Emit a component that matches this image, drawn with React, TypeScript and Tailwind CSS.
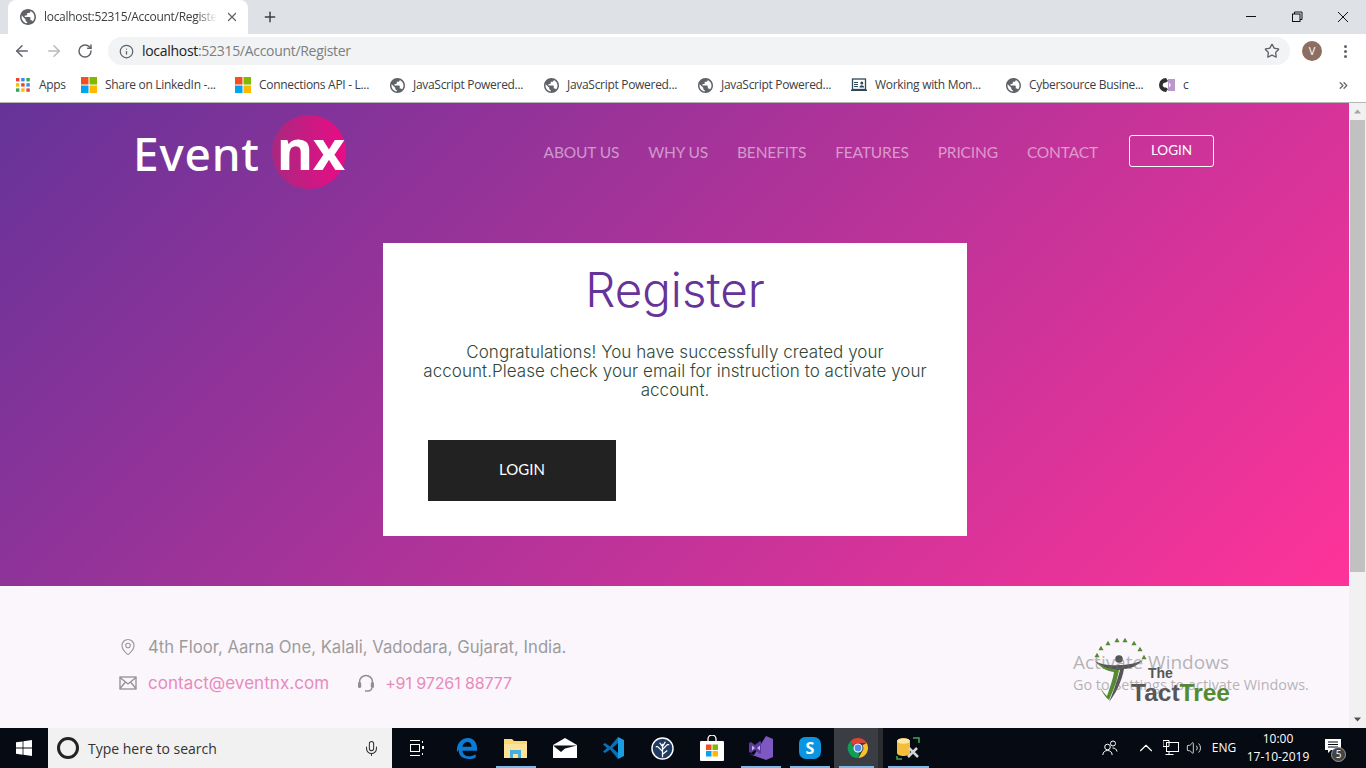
import { ArrowLeft, ArrowRight, RotateCw, Info, Star, X, Plus, MapPin, Mic, ChevronUp, Volume2, ChevronsRight } from "lucide-react";

const GLOBE = "M12 2C6.48 2 2 6.48 2 12s4.48 10 10 10 10-4.48 10-10S17.52 2 12 2zm-1 17.93c-3.95-.49-7-3.85-7-7.93 0-.62.08-1.21.21-1.79L9 15v1c0 1.1.9 2 2 2v1.93zm6.9-2.54c-.26-.81-1-1.39-1.9-1.39h-1v-3c0-.55-.45-1-1-1H8v-2h2c.55 0 1-.45 1-1V7h2c1.1 0 2-.9 2-2v-.41c2.93 1.19 5 4.06 5 7.41 0 2.08-.8 3.97-2.1 5.39z";

function Globe({ size = 18 }: { size?: number }) {
  return (
    <svg width={size} height={size} viewBox="2 2 20 20" className="shrink-0">
      <circle cx="12" cy="12" r="9" fill="#fff" />
      <path d={GLOBE} fill="#5f6368" />
    </svg>
  );
}

function MsLogo() {
  return (
    <svg width="16" height="16" viewBox="0 0 16 16" className="shrink-0">
      <rect width="7.5" height="7.5" fill="#f25022" />
      <rect x="8.5" width="7.5" height="7.5" fill="#7fba00" />
      <rect y="8.5" width="7.5" height="7.5" fill="#00a4ef" />
      <rect x="8.5" y="8.5" width="7.5" height="7.5" fill="#ffb900" />
    </svg>
  );
}

function AppsIcon() {
  const colors = ["#ea4335", "#4285f4", "#34a853", "#fbbc05", "#ea4335", "#4285f4", "#34a853", "#fbbc05", "#ea4335"];
  return (
    <svg width="14" height="14" viewBox="0 0 14 14" className="shrink-0">
      {colors.map((c, i) => (
        <rect key={i} x={(i % 3) * 5.2} y={Math.floor(i / 3) * 5.2} width="3.4" height="3.4" fill={c} />
      ))}
    </svg>
  );
}

function BoardIcon() {
  return (
    <svg width="16" height="14" viewBox="0 0 16 14" className="shrink-0">
      <rect x="1.5" y="1" width="13" height="10.5" fill="#fff" stroke="#2d4a5a" strokeWidth="1.3" />
      <rect x="3" y="4" width="4" height="1" fill="#2d4a5a" />
      <rect x="3" y="6" width="4" height="1" fill="#2d4a5a" />
      <rect x="3" y="8" width="4" height="1" fill="#2d4a5a" />
      <circle cx="10.8" cy="5" r="1.5" fill="#2d4a5a" />
      <path d="M8.5 9.500c0-3 4.600-3 4.600 0z" fill="#2d4a5a" />
      <rect x="0" y="11.500" width="16" height="1.500" fill="#2d4a5a" />
    </svg>
  );
}

function CIcon() {
  return (
    <svg width="16" height="14" viewBox="0 0 16 14" className="shrink-0">
      <rect x="9" y="1" width="7" height="12" fill="#b79ac9" />
      <path d="M7 0a7 7 0 1 0 0 14l2-3-2-1.500a2.600 2.600 0 1 1 0-5L9 3z" fill="#2f2f2f" />
      <path d="M10 4.500l2 2.500-2 2.500z" fill="#fff" />
    </svg>
  );
}

function Bookmark({ icon, label, w }: { icon: React.ReactNode; label: string; w: string }) {
  return (
    <div className={`flex items-center gap-2 shrink-0 ${w}`}>
      <span className="w-4 flex justify-center shrink-0">{icon}</span>
      <span className="text-[12px] tracking-[-0.3px] text-[#3c4043] whitespace-nowrap">{label}</span>
    </div>
  );
}

function Browser() {
  return (
    <header className="shrink-0 bg-white font-['Open_Sans',sans-serif]">
      <div className="h-[34px] bg-[#dee1e6] flex items-stretch">
        <div className="ml-2 w-[240px] bg-white rounded-t-lg flex items-center pl-[12px] pr-[9px]">
          <Globe size={16} />
          <span className="ml-2 text-[12px] tracking-[-0.3px] text-[#3c4043] whitespace-nowrap overflow-hidden flex-1 [mask-image:linear-gradient(90deg,#000_88%,transparent)]">localhost:52315/Account/Register</span>
          <X size={14} strokeWidth={2.2} className="ml-2 text-[#5f6368]" />
        </div>
        <div className="ml-[14px] flex items-center">
          <Plus size={16} strokeWidth={2.2} className="text-[#3c4043]" />
        </div>
        <div className="ml-auto flex items-center">
          <div className="w-[46px] flex justify-center">
            <svg width="12" height="12" viewBox="0 0 12 12"><rect x="1" y="5" width="10" height="1" fill="#111" /></svg>
          </div>
          <div className="w-[46px] flex justify-center">
            <svg width="12" height="12" viewBox="0 0 12 12" fill="none" stroke="#111"><rect x="1.500" y="3" width="7.500" height="7.500" /><path d="M3.500 3V1h7.500v7.500H9" /></svg>
          </div>
          <div className="w-[46px] flex justify-center">
            <svg width="12" height="12" viewBox="0 0 12 12" stroke="#111"><path d="M1 1l10 10M11 1L1 11" /></svg>
          </div>
        </div>
      </div>
      <div className="h-[34px] flex items-center">
        <div className="w-[108px] flex items-center pl-[13px] gap-[14px] shrink-0">
          <ArrowLeft size={18} strokeWidth={2} className="text-[#5f6368]" />
          <ArrowRight size={18} strokeWidth={2} className="text-[#b8babd]" />
          <RotateCw size={16} strokeWidth={2.2} className="text-[#5f6368]" />
        </div>
        <div className="w-[1182px] h-[28px] rounded-full bg-[#f1f3f4] flex items-center pl-[11px] pr-[10px] shrink-0">
          <Info size={15} strokeWidth={2} className="text-[#5f6368]" />
          <span className="ml-[8px] text-[14px] tracking-[-0.3px] text-[#7b7e82] leading-none"><span className="text-[#202124]">localhost</span>:52315/Account/Register</span>
          <Star size={16} strokeWidth={2} className="ml-auto text-[#5f6368]" />
        </div>
        <div className="ml-[12px] w-5 h-5 rounded-full bg-[#8d6e63] text-white text-[11px] flex items-center justify-center shrink-0">V</div>
        <div className="ml-[22px] flex flex-col gap-[2px]">
          <span className="w-[3px] h-[3px] rounded-full bg-[#5f6368]" />
          <span className="w-[3px] h-[3px] rounded-full bg-[#5f6368]" />
          <span className="w-[3px] h-[3px] rounded-full bg-[#5f6368]" />
        </div>
      </div>
      <div className="h-[34px] flex items-center pl-[15px] border-b border-[#b5b5b5] box-content">
        <Bookmark w="w-[66px]" icon={<AppsIcon />} label="Apps" />
        <Bookmark w="w-[154px]" icon={<MsLogo />} label="Share on LinkedIn -..." />
        <Bookmark w="w-[154px]" icon={<MsLogo />} label="Connections API - L..." />
        <Bookmark w="w-[154px]" icon={<Globe size={15} />} label="JavaScript Powered..." />
        <Bookmark w="w-[154px]" icon={<Globe size={15} />} label="JavaScript Powered..." />
        <Bookmark w="w-[154px]" icon={<Globe size={15} />} label="JavaScript Powered..." />
        <Bookmark w="w-[154px]" icon={<BoardIcon />} label="Working with Mon..." />
        <Bookmark w="w-[154px]" icon={<Globe size={15} />} label="Cybersource Busine..." />
        <Bookmark w="w-[100px]" icon={<CIcon />} label="c" />
        <ChevronsRight size={13} strokeWidth={2.6} className="ml-[78px] text-[#6b6e72]" />
      </div>
    </header>
  );
}

function Logo() {
  return (
    <div className="relative flex items-center h-[76px] w-[215px] text-white">
      <div className="absolute left-[137px] top-0 w-[74px] h-[74px] rounded-full bg-[linear-gradient(90deg,#a9287f,#ea0c85)]" />
      <span className="relative -ml-[2px] font-['Noto_Sans',sans-serif] font-medium text-[46px] leading-none tracking-[0.8px]">Event</span>
      <span className="relative ml-[17px] font-['Noto_Sans',sans-serif] font-bold text-[56px] leading-none -mt-[10px] tracking-[-0.5px]">nx</span>
    </div>
  );
}

function Nav() {
  const items = ["ABOUT US", "WHY US", "BENEFITS", "FEATURES", "PRICING", "CONTACT"];
  return (
    <nav className="ml-auto flex items-center font-['Lato',sans-serif]">
      <div className="flex gap-[29px] text-[15.5px] text-white/50 tracking-[-0.15px]">
        {items.map((t) => (
          <span key={t}>{t}</span>
        ))}
      </div>
      <div className="ml-[31px] -mt-[5px] w-[85px] h-[32px] border border-white rounded-[3px] flex items-center justify-center text-white text-[13.5px]">LOGIN</div>
    </nav>
  );
}

function Card() {
  return (
    <section className="ml-[383px] mt-[40px] w-[584px] h-[293px] bg-white flex flex-col">
      <h1 className="mt-[17px] text-center text-[#663399] text-[47.5px] leading-[60px] font-light font-['Inter',sans-serif]">Register</h1>
      <p className="mt-[23px] text-center text-[17px] leading-[19px] font-light tracking-[0.05px] text-[#2f4737] font-['Inter',sans-serif]">
        Congratulations! You have successfully created your
        <br />
        account.Please check your email for instruction to activate your
        <br />
        account.
      </p>
      <div className="ml-[45px] mt-[40px] w-[188px] h-[61px] pb-[2px] bg-[#222222] text-white flex items-center justify-center text-[15px] font-['Lato',sans-serif]">LOGIN</div>
    </section>
  );
}

function TactTree() {
  const tri: [number, number][] = [[4, 18], [8, 11], [15, 6], [24, 3], [32, 3], [41, 6], [47, 12], [51, 20]];
  return (
    <div className="relative w-[137px] h-[66px] -mt-[1px]">
      <svg width="60" height="66" viewBox="0 0 60 66" className="absolute left-0 top-0">
        {tri.map(([x, y], i) => (
          <path key={i} d={`M${x - 2.6} ${y + 2.2}L${x} ${y - 2.2}L${x + 2.6} ${y + 2.2}Z`} fill="#558b2f" />
        ))}
        <circle cx="26" cy="22" r="3.8" fill="#555" />
        <path d="M2 24C10 32 20 33 27 33C24 44 20 56 16 65C22 58 29 44 31 32C38 32 45 28 50 23C44 26 34 28 26 28C18 29 9 28 2 24Z" fill="#555" />
        <path d="M2 24C10 31 18 32 26 33C24 44 21 52 16 63C12 60 9 55 7 50C10 55 12 57 14 59C17 50 20 42 21 35C13 34 7 30 2 24Z" fill="#558b2f" />
      </svg>
      <span className="absolute left-[55px] top-[29px] font-['Liberation_Sans',sans-serif] font-bold text-[14px] leading-none text-[#555]">The</span>
      <span className="absolute left-[38px] top-[44px] font-['Liberation_Sans',sans-serif] font-bold text-[24.5px] leading-none whitespace-nowrap text-[#555]">Tact<span className="text-[#558b2f]">Tree</span></span>
    </div>
  );
}

function Footer() {
  return (
    <footer className="relative flex-1 bg-[#faf6fc] flex items-start justify-between pl-[118px] pr-[119px] pt-[52px] font-['Inter',sans-serif]">
      <div className="flex flex-col gap-[16px]">
        <div className="flex items-center h-[20px]">
          <span className="w-[19px] flex justify-center"><MapPin size={18} strokeWidth={1.5} className="text-[#999999] -mt-[2px]" /></span>
          <span className="ml-[11px] text-[#9c9c9c] text-[16.7px]">4th Floor, Aarna One, Kalali, Vadodara, Gujarat, India.</span>
        </div>
        <div className="flex items-center h-[20px]">
          <span className="w-[19px] flex justify-center -mt-[2px]">
            <svg width="18" height="14" viewBox="0 0 18 14" fill="none" stroke="#8f8f8f" strokeWidth="1.300"><rect x="1" y="1" width="16" height="12" /><path d="M1 1.500l8 6.500 8-6.500M1 12.500l5.500-6.500M17 12.500L11.500 6" /></svg>
          </span>
          <span className="ml-[11px] text-[#e98abd] text-[17px] tracking-[0.05px]">contact@eventnx.com</span>
          <svg width="18" height="18" viewBox="0 0 18 18" fill="none" stroke="#8f8f8f" className="ml-[28px] mb-[2px]"><path d="M2.500 10V8a6.500 6.500 0 0 1 13 0v2" strokeWidth="1.500" /><rect x="1" y="8" width="3.200" height="6" rx="1.500" fill="#8f8f8f" strokeWidth="0" /><rect x="13.800" y="8" width="3.200" height="6" rx="1.500" fill="#8f8f8f" strokeWidth="0" /><path d="M15 14c-.500 2-2 3-4 3H8" strokeWidth="1.300" /></svg>
          <span className="ml-[10px] mb-[2px] text-[#e98abd] text-[16px] tracking-[-0.1px]">+91 97261 88777</span>
        </div>
      </div>
      <div>
        <TactTree />
      </div>
      <div className="absolute left-[1073px] top-[67px] text-[#6e6e6e]/50 font-['Open_Sans',sans-serif] leading-none whitespace-nowrap">
        <div className="text-[19px]">Activate Windows</div>
        <div className="mt-[6px] text-[14.4px]">Go to Settings to activate Windows.</div>
      </div>
    </footer>
  );
}

function Scrollbar() {
  return (
    <aside className="w-[17px] shrink-0 bg-[#f1f1f1] flex flex-col items-center">
      <svg width="17" height="17" viewBox="0 0 17 17" className="shrink-0"><path d="M5 10.500L8.500 6.500L12 10.500Z" fill="#a3a3a3" /></svg>
      <div className="w-[15px] h-[452px] bg-[#c1c1c1]" />
      <svg width="17" height="17" viewBox="0 0 17 17" className="mt-auto shrink-0"><path d="M5 6.500L8.500 10.500L12 6.500Z" fill="#505050" /></svg>
    </aside>
  );
}

function Slot({ children, active, on, w = "w-[49px]" }: { children: React.ReactNode; active?: boolean; on?: boolean; w?: string }) {
  return (
    <div className={`relative h-full shrink-0 flex items-center justify-center ${w} ${active ? "bg-[#3a3d42]" : ""}`}>
      {children}
      {on && <span className="absolute bottom-0 left-[5px] right-[4px] h-[2px] bg-[#7cb9e8]" />}
    </div>
  );
}

function Taskbar() {
  return (
    <div className="h-[40px] shrink-0 bg-[#060a12] flex items-stretch text-white font-['Open_Sans',sans-serif]">
      <div className="w-[48px] flex items-center justify-center">
        <svg width="16" height="16" viewBox="0 0 16 16" fill="#fff"><path d="M0 2.300l6.600-.9v6.200H0zM7.400 1.300L16 0v7.600H7.400zM0 8.400h6.600v6.300L0 13.800zM7.400 8.400H16V16l-8.600-1.200z" /></svg>
      </div>
      <div className="w-[344px] bg-[#f1f1f1] flex items-center pl-[9px] text-[14px] text-[#333]">
        <span className="w-[22px] h-[22px] rounded-full border-[3px] border-[#222]" />
        <span className="ml-[9px]">Type here to search</span>
        <Mic size={17} strokeWidth={1.5} className="ml-auto mr-[12px] text-[#333]" />
      </div>
      <div className="w-[50px] flex items-center justify-center">
        <svg width="16" height="16" viewBox="0 0 16 16" fill="none" stroke="#fff"><path d="M1 .5h10M1 15.500h10M13.500 1v2M13.500 13v2" /><rect x="1.500" y="4.500" width="9" height="7" /><rect x="13" y="6" width="2" height="3" fill="#fff" stroke="none" /></svg>
      </div>
      <Slot>
        <svg width="22" height="22" viewBox="0 0 24 24" fill="#0a7cd6"><path d="M1 13C1.500 6 7 1 13 1c6 0 10 4.500 10 12v2H7c.3 4 3.500 6 7 6 3 0 5.500-.8 7.500-2.200v3.500C19.500 23.500 17 24 14 24 7 24 2.500 20 3 14c-.8.800-1.400 1.800-2 3zM7 10.500h10C17 7.500 15 5.500 12.500 5.500 10 5.500 7.500 7.500 7 10.500z" /></svg>
      </Slot>
      <Slot on>
        <svg width="23" height="20" viewBox="0 0 23 20"><path d="M0 1h8l2 2h13v17H0z" fill="#fbd777" /><rect x="0" y="6" width="23" height="14" fill="#fce39a" /><path d="M6 20v-8h11v8h-3v-4H9v4z" fill="#47aee0" /></svg>
      </Slot>
      <Slot>
        <svg width="24" height="20" viewBox="0 0 24 20"><rect y="7" width="24" height="13" fill="#fff" /><path d="M0 7L12 0l12 7z" fill="#fff" /><path d="M0 7.500h24L12 10.500 8 14z" fill="#0b0f16" /></svg>
      </Slot>
      <Slot>
        <svg width="24" height="24" viewBox="0 0 24 24"><path d="M1 8.500L3 7l5 3.500L16 1v6l-5.500 5L16 17v6L8 13.500 3 17l-2-1.500L5 12z" fill="#0a6fb5" /><path d="M16 1l6 3v16l-6 3z" fill="#1b9de2" /></svg>
      </Slot>
      <Slot>
        <svg width="23" height="23" viewBox="0 0 24 24" fill="none" stroke="#fff"><circle cx="12" cy="12" r="11" fill="#1f3a63" strokeWidth="1.500" /><path d="M12 21V7M12 15L7 10M12 13l5-5M12 10L9 6M12 10l3-5M12 18l5-4M7 10H5M17 8h2" strokeWidth="1.300" /></svg>
      </Slot>
      <Slot>
        <svg width="24" height="26" viewBox="0 0 24 26"><path d="M8 7V4a4 4 0 0 1 8 0v3" fill="none" stroke="#fff" strokeWidth="1.300" /><rect y="6" width="24" height="20" rx="1" fill="#fff" /><rect x="6" y="9.500" width="5.500" height="5.500" fill="#f25022" /><rect x="12.500" y="9.500" width="5.500" height="5.500" fill="#7fba00" /><rect x="6" y="16" width="5.500" height="5.500" fill="#00a4ef" /><rect x="12.500" y="16" width="5.500" height="5.500" fill="#ffb900" /></svg>
      </Slot>
      <Slot on>
        <svg width="24" height="24" viewBox="0 0 24 24"><path d="M0 18l5 1L17 0l7 3v18l-7 3z" fill="#7d57c2" /><path d="M0 7l2-1 4 3 5-4 1 1v11l-1 1-5-4-4 3-2-1z" fill="#5c3a9e" /><path d="M3 9.500v5L6 12zM8 12l3 2.500v-5z" fill="#c9b4ea" /></svg>
      </Slot>
      <Slot on>
        <svg width="24" height="24" viewBox="0 0 24 24"><path d="M7 1h9a7 7 0 0 1 7 7v8a7 7 0 0 1-7 7H8a7 7 0 0 1-7-7V7a6 6 0 0 1 6-6z" fill="#0a94e2" /><text x="12" y="18" textAnchor="middle" fontSize="16" fontWeight="700" fill="#fff" fontFamily="Open Sans, sans-serif">S</text></svg>
      </Slot>
      <Slot on active w="w-[44px]">
        <svg width="22" height="22" viewBox="0 0 24 24" className="ml-[3px]">
          <path d="M12 1a11 11 0 0 1 9.500 5.500H12a5.500 5.500 0 0 0-5 3.200L3.500 4.800A11 11 0 0 1 12 1z" fill="#db4437" />
          <path d="M21.500 6.500A11 11 0 0 1 12.500 23l4.200-7.500A5.500 5.500 0 0 0 16.800 9z" fill="#fbc02d" />
          <path d="M12.500 23A11 11 0 0 1 3.500 4.800L8 12.500a5.500 5.500 0 0 0 5.500 3z" fill="#0f9d58" />
          <circle cx="12" cy="12" r="4.300" fill="#4f8bf0" stroke="#fff" strokeWidth="1.200" />
        </svg>
      </Slot>
      <div className="w-[5px] bg-[#2a2c30]" />
      <Slot on w="w-[50px]">
        <svg width="24" height="24" viewBox="0 0 24 24"><path d="M1 6c0-5 13-5 13 0v11c0 4-13 4-13 0z" fill="#f4bd3c" /><ellipse cx="7.500" cy="5" rx="6.500" ry="2.800" fill="#fde7a9" /><path d="M17 2h6v5M1 20v3h5M23 10" fill="none" stroke="#45a65a" strokeWidth="1.500" /><path d="M12 21l9-9M13 12l9 9" stroke="#d4d4d4" strokeWidth="2.500" /></svg>
      </Slot>
      <div className="ml-auto flex items-center text-[12px]">
        <div className="w-[30px] flex justify-center">
          <svg width="16" height="16" viewBox="0 0 16 16" fill="none" stroke="#fff" strokeWidth="1"><circle cx="5.500" cy="7" r="2.800" /><path d="M.8 15c.3-3 2-4.500 4.700-4.500S9.900 12 10.200 15" /><circle cx="11" cy="3.500" r="2.500" /><path d="M10.500 8c2.500 0 4 1.200 4.500 3.500" /></svg>
        </div>
        <div className="ml-[9px] w-[24px] flex justify-center"><ChevronUp size={22} strokeWidth={1.2} /></div>
        <div className="w-[26px] flex justify-center">
          <svg width="16" height="16" viewBox="0 0 16 16" fill="none" stroke="#fff" strokeWidth="1"><rect x="3.500" y="2.500" width="12" height="9" /><path d="M0 .5h6v6H0zM6 11.500v3M2.500 14.500h8" fill="none" /></svg>
        </div>
        <div className="w-[20px] flex justify-center"><Volume2 size={16} strokeWidth={1.2} /></div>
        <div className="w-[40px] text-center">ENG</div>
        <div className="w-[68px] flex flex-col items-center leading-[18px]">
          <span>10:00</span>
          <span>17-10-2019</span>
        </div>
        <div className="relative w-[42px] flex justify-center">
          <svg width="16" height="15" viewBox="0 0 16 15" fill="#fff" className="-mt-[4px]"><path d="M0 0h16v11H6l-3 3v-3H0z" /><path d="M3 3h10M3 5.500h10M3 8h10" stroke="#060a12" /></svg>
          <span className="absolute left-[19px] top-[4px] w-[15px] h-[15px] rounded-full bg-[#444] border border-[#999] flex items-center justify-center text-[10px] leading-none">5</span>
        </div>
        <div className="w-[12px]" />
      </div>
    </div>
  );
}

export default function App() {
  return (
    <div className="w-[1366px] h-[768px] overflow-hidden flex flex-col">
      <Browser />
      <div className="flex-1 min-h-0 flex">
        <main className="flex-1 min-w-0 flex flex-col relative">
          <div className="h-[483px] shrink-0 bg-[linear-gradient(135deg,#663399,#ff3399)]">
            <div className="h-[100px] flex items-center px-[135px]">
              <Logo />
              <Nav />
            </div>
            <Card />
          </div>
          <Footer />
        </main>
        <Scrollbar />
      </div>
      <Taskbar />
    </div>
  );
}
